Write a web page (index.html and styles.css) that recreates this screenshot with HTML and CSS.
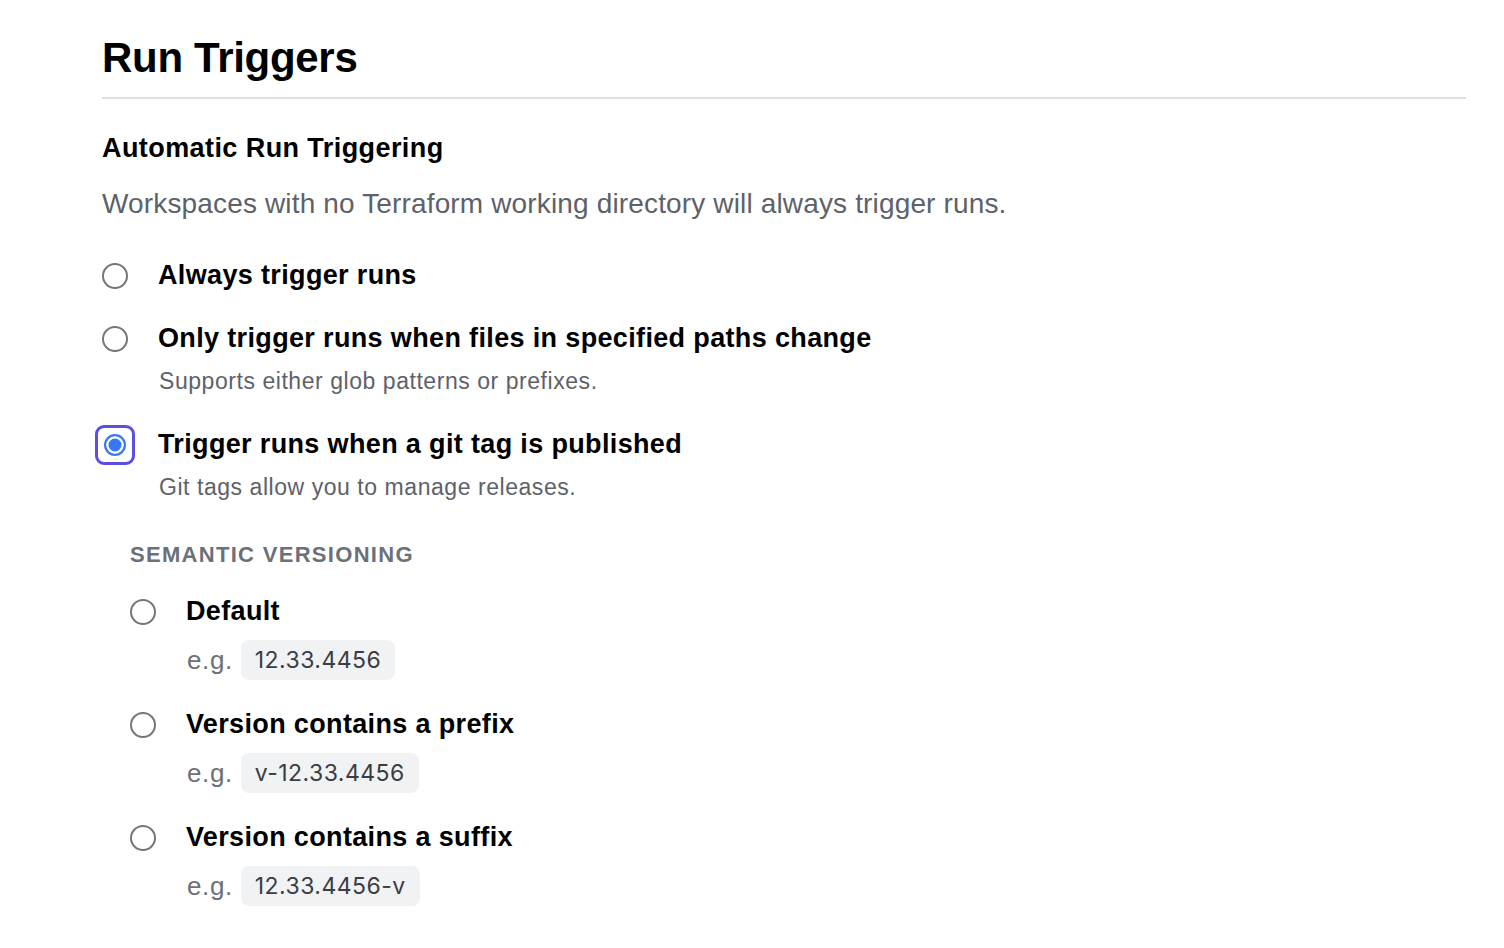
FILE: index.html
```
<!DOCTYPE html>
<html lang="en">
<head>
<meta charset="utf-8">
<title>Run Triggers</title>
<link rel="stylesheet" href="styles.css">
</head>
<body>
<main class="page">
  <h1 class="title">Run Triggers</h1>
  <section class="section">
    <h2 class="section-title">Automatic Run Triggering</h2>
    <p class="section-desc">Workspaces with no Terraform working directory will always trigger runs.</p>

    <div class="options">
      <label class="option">
        <span class="radio"><input type="radio" name="trigger"></span>
        <span class="option-body">
          <span class="option-label">Always trigger runs</span>
        </span>
      </label>
      <label class="option">
        <span class="radio"><input type="radio" name="trigger"></span>
        <span class="option-body">
          <span class="option-label">Only trigger runs when files in specified paths change</span>
          <span class="option-desc">Supports either glob patterns or prefixes.</span>
        </span>
      </label>
      <label class="option">
        <span class="radio radio-focus"><input type="radio" name="trigger" checked></span>
        <span class="option-body">
          <span class="option-label">Trigger runs when a git tag is published</span>
          <span class="option-desc">Git tags allow you to manage releases.</span>
        </span>
      </label>
    </div>

    <div class="semver">
      <h3 class="semver-title">Semantic Versioning</h3>
      <div class="sub-options">
        <label class="option">
          <span class="radio"><input type="radio" name="semver"></span>
          <span class="option-body">
            <span class="option-label">Default</span>
            <span class="example"><span class="eg">e.g.</span><code class="pill">12.33.4456</code></span>
          </span>
        </label>
        <label class="option">
          <span class="radio"><input type="radio" name="semver"></span>
          <span class="option-body">
            <span class="option-label">Version contains a prefix</span>
            <span class="example"><span class="eg">e.g.</span><code class="pill">v-12.33.4456</code></span>
          </span>
        </label>
        <label class="option">
          <span class="radio"><input type="radio" name="semver"></span>
          <span class="option-body">
            <span class="option-label">Version contains a suffix</span>
            <span class="example"><span class="eg">e.g.</span><code class="pill">12.33.4456-v</code></span>
          </span>
        </label>
      </div>
    </div>
  </section>
</main>
</body>
</html>
```
FILE: styles.css
```
* { box-sizing: border-box; }

html, body {
  margin: 0;
  padding: 0;
  background: #ffffff;
}

body {
  font-family: "Liberation Sans", Arial, Helvetica, sans-serif;
  color: #000000;
}

.page {
  padding: 0 38px 40px 102px;
}

.title {
  margin: 0;
  padding-top: 34px;
  padding-bottom: 15px;
  font-size: 42px;
  line-height: 48px;
  font-weight: 700;
  letter-spacing: -0.3px;
  border-bottom: 2px solid #dcdfe3;
}

.section-title {
  margin: 33px 0 0;
  font-size: 27px;
  line-height: 32px;
  font-weight: 700;
  letter-spacing: 0.42px;
}

.section-desc {
  margin: 24px 0 0;
  font-size: 28px;
  line-height: 32px;
  color: #5d626a;
  letter-spacing: 0.15px;
}

.options {
  margin-top: 39px;
  display: flex;
  flex-direction: column;
  gap: 31px;
}

.option {
  display: flex;
  align-items: flex-start;
  gap: 30px;
  cursor: pointer;
}

.radio {
  position: relative;
  flex: none;
  width: 26px;
  height: 26px;
  margin-top: 4px;
  display: flex;
}

.radio input {
  appearance: none;
  -webkit-appearance: none;
  margin: 0;
  width: 26px;
  height: 26px;
  border: 2px solid #767676;
  border-radius: 50%;
  background: #ffffff;
}

.radio input:checked {
  width: 22px;
  height: 22px;
  margin: 2px;
  border: 2px solid #3478f6;
  background: #3478f6;
  box-shadow: inset 0 0 0 2.5px #ffffff;
}

.radio-focus::after {
  content: "";
  position: absolute;
  inset: -7px;
  border: 3px solid #5b4fe3;
  border-radius: 9px;
  pointer-events: none;
}

.option-body {
  display: flex;
  flex-direction: column;
}

.option-label {
  font-size: 27px;
  line-height: 32px;
  font-weight: 700;
  letter-spacing: 0.35px;
}

.option-desc {
  margin-top: 11px;
  padding-left: 1px;
  font-size: 23px;
  line-height: 32px;
  color: #5d626a;
  letter-spacing: 0.55px;
}

.semver {
  margin-top: 38px;
  padding-left: 28px;
}

.semver-title {
  margin: 0;
  font-size: 22px;
  line-height: 28px;
  font-weight: 700;
  text-transform: uppercase;
  letter-spacing: 1.3px;
  color: #6b7079;
}

.sub-options {
  margin-top: 26px;
  display: flex;
  flex-direction: column;
  gap: 28px;
}

.example {
  margin-top: 13px;
  display: flex;
  align-items: center;
  gap: 8px;
  padding-left: 1px;
}

.eg {
  font-size: 26px;
  line-height: 40px;
  color: #6b7079;
  letter-spacing: 0.6px;
}

.pill {
  display: inline-block;
  height: 40px;
  padding: 0 14px;
  border-radius: 8px;
  background: #f1f2f4;
  font-family: Inter, "Liberation Sans", sans-serif;
  font-size: 23px;
  line-height: 40px;
  color: #3a3d43;
  letter-spacing: 0.45px;
}
```
